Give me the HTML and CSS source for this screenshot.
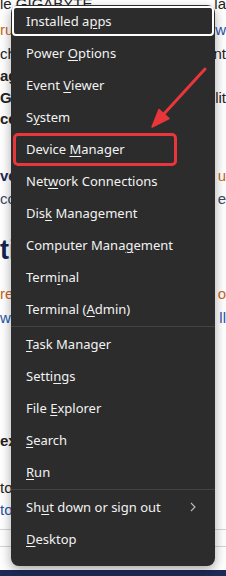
FILE: index.html
```html
<!DOCTYPE html>
<html>
<head>
<meta charset="utf-8">
<link rel="stylesheet" href="styles.css">
</head>
<body>
<div class="doc">
  <div class="row h26"><span>le GIGABYTE</span><span>la</span></div>
  <div class="row h26"><span class="or">ru</span><span class="bl">s w</span></div>
  <div class="row h22"><span>ch</span><span>nt</span></div>
  <div class="row h22 b"><span>ag</span><span></span></div>
  <div class="row h22 b"><span>Go</span><span class="nb">lit</span></div>
  <div class="row h21 b"><span>ce</span><span></span></div>
  <div class="row h22 b navy mt35"><span>ve</span><span class="nb or">r u</span></div>
  <div class="row h24 gray"><span>cc</span><span class="nb">e</span></div>
  <div class="row h36 head mt22"><span>ti</span><span></span></div>
  <div class="row h22 mt14"><span class="or">re</span><span class="or">o</span></div>
  <div class="row h26 bl"><span>w</span><span>ll</span></div>
  <div class="row h24 b mt98"><span>ex</span><span></span></div>
  <div class="row h22 mt24"><span>to</span><span></span></div>
  <div class="row h23 bl"><span>to</span><span></span></div>
  <div class="rules"></div>
  <div class="taskbar"></div>
</div>

<div class="menu">
  <div class="item focused"><span class="label">Installed a<u>p</u>ps</span></div>
  <div class="item"><span class="label">Power <u>O</u>ptions</span></div>
  <div class="item"><span class="label">Event <u>V</u>iewer</span></div>
  <div class="item"><span class="label">S<u>y</u>stem</span></div>
  <div class="item"><span class="label">Device <u>M</u>anager</span><span class="redbox"></span></div>
  <div class="item"><span class="label">Net<u>w</u>ork Connections</span></div>
  <div class="item"><span class="label">Dis<u>k</u> Management</span></div>
  <div class="item"><span class="label">Computer Mana<u>g</u>ement</span></div>
  <div class="item"><span class="label">Term<u>i</u>nal</span></div>
  <div class="item"><span class="label">Terminal (<u>A</u>dmin)</span></div>
  <div class="sep"></div>
  <div class="item"><span class="label"><u>T</u>ask Manager</span></div>
  <div class="item"><span class="label">Setti<u>n</u>gs</span></div>
  <div class="item"><span class="label">File <u>E</u>xplorer</span></div>
  <div class="item"><span class="label"><u>S</u>earch</span></div>
  <div class="item"><span class="label"><u>R</u>un</span></div>
  <div class="sep"></div>
  <div class="item sub"><span class="label">Sh<u>u</u>t down or sign out</span>
    <svg class="chev" width="6" height="10" viewBox="0 0 6 10"><polyline points="1,1 5,5 1,9" fill="none" stroke="#bdbdbd" stroke-width="1.1"/></svg>
  </div>
  <div class="item"><span class="label"><u>D</u>esktop</span></div>
</div>

<svg class="arrow" width="226" height="576" viewBox="0 0 226 576">
  <line x1="205" y1="69" x2="162" y2="116" stroke="#e8363b" stroke-width="3" stroke-linecap="round"/>
  <polygon points="152,127 159,109.5 169,118.5" fill="#e8363b" stroke="#e8363b" stroke-width="1.5" stroke-linejoin="round"/>
</svg>
</body>
</html>
```

FILE: styles.css
```css
html, body {
  margin: 0;
  padding: 0;
}
body {
  width: 226px;
  height: 576px;
  overflow: hidden;
  background: #ffffff;
  position: relative;
  font-family: "Liberation Sans", Arial, sans-serif;
}
.doc {
  margin-top: -10px;
  display: flex;
  flex-direction: column;
  color: #222222;
  font-size: 15px;
}
.row {
  display: flex;
  justify-content: space-between;
  align-items: center;
  white-space: nowrap;
  overflow: hidden;
}
.h21 { height: 21px; }
.h22 { height: 22px; }
.h23 { height: 23px; }
.h24 { height: 24px; }
.h26 { height: 26px; }
.h36 { height: 36px; }
.mt14 { margin-top: 14px; }
.mt22 { margin-top: 22px; }
.mt24 { margin-top: 24px; }
.mt35 { margin-top: 35px; }
.mt98 { margin-top: 98px; }
.b { font-weight: bold; }
.nb { font-weight: normal; }
.navy { color: #1b2a55; }
.gray { color: #3a4a66; }
.or { color: #c8661e; }
.bl { color: #2456a8; }
.head {
  font-size: 27px;
  font-weight: bold;
  color: #14244f;
}
.rules {
  margin-top: 8px;
  height: 16px;
  border-top: 1px solid #d4d4d4;
  border-bottom: 1px solid #d4d4d4;
}
.taskbar {
  margin-top: 23px;
  height: 8px;
  background: #1d2c57;
}

.menu {
  position: absolute;
  left: 11px;
  top: 5px;
  width: 204px;
  height: 561px;
  box-sizing: border-box;
  background: #2c2c2c;
  border-radius: 8px;
  box-shadow: 0 4px 12px rgba(0, 0, 0, 0.35);
  font-family: "Noto Sans", "Open Sans", sans-serif;
  font-size: 13px;
  color: #f2f2f2;
  display: flex;
  flex-direction: column;
}
.item {
  height: 32px;
  flex: none;
  display: flex;
  align-items: center;
  padding-left: 15px;
  position: relative;
  white-space: nowrap;
}
.label {
  white-space: pre;
}
.item u {
  text-decoration-thickness: 1px;
  text-underline-offset: 2px;
}
.focused {
  border-radius: 5px;
  outline: 2px solid #ffffff;
  outline-offset: -3px;
}
.redbox {
  position: absolute;
  left: 2px;
  top: 0;
  width: 164px;
  height: 33px;
  box-sizing: border-box;
  border: 3px solid #e8363b;
  border-radius: 5px;
}
.sep {
  height: 1px;
  flex: none;
  background: #434343;
  margin: 1px 0 1px;
}
.sub .chev {
  position: absolute;
  right: 19px;
  top: 11px;
}
.arrow {
  position: absolute;
  left: 0;
  top: 0;
  pointer-events: none;
}
```
